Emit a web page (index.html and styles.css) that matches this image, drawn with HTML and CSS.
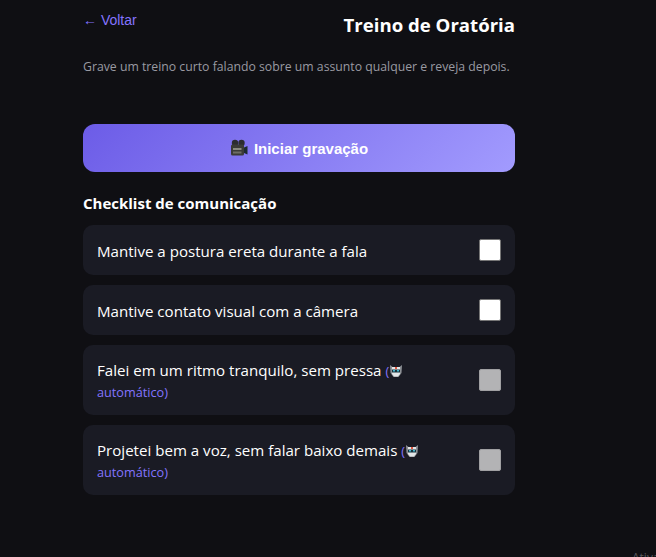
FILE: index.html
```html
<!DOCTYPE html>
<html lang="pt-BR">
<head>
    <meta charset="UTF-8">
    <meta name="viewport" content="width=device-width, initial-scale=1.0">
    <title>Treino de Oratória</title>
    <link rel="stylesheet" href="styles.css">
</head>
<body>
    <div class="container">
        <header class="top">
            <a class="back" href="#">← Voltar</a>
            <h1>Treino de Oratória</h1>
        </header>
        <p class="intro">Grave um treino curto falando sobre um assunto qualquer e reveja depois.</p>

        <button class="record" type="button">
            <svg class="camera" viewBox="0 0 18 18" width="18" height="18" aria-hidden="true">
                <circle cx="5" cy="4" r="3.200" fill="#2c2c30"/>
                <circle cx="11.500" cy="4" r="3.200" fill="#2c2c30"/>
                <rect x="1" y="5.500" width="13" height="11" rx="1.500" fill="#3b3b37"/>
                <rect x="3" y="9" width="8.500" height="2" fill="#8a8a80"/>
                <rect x="3" y="12.500" width="8.500" height="2" fill="#6e6e66"/>
                <path d="M14 8.500l3.500-1.500v8.500l-3.500-1.500z" fill="#1d2a30"/>
            </svg>
            Iniciar gravação
        </button>

        <h2>Checklist de comunicação</h2>
        <ul class="checklist">
            <li class="item">
                <span>Mantive a postura ereta durante a fala</span>
                <input type="checkbox">
            </li>
            <li class="item">
                <span>Mantive contato visual com a câmera</span>
                <input type="checkbox">
            </li>
            <li class="item tall">
                <span>Falei em um ritmo tranquilo, sem pressa <small class="auto">(<svg class="robot" viewBox="0 0 14 14" width="14" height="14" aria-hidden="true"><path d="M1 1l2.500 2h7L13 1l-.5 8L9.500 13h-5L1.500 9z" fill="#8d9196"/><path d="M3 3h8v7l-2 2.500H5L3 10z" fill="#e4e6e8"/><rect x="6" y="3" width="2" height="2" fill="#e0563f"/><rect x="3" y="5.500" width="8" height="3" fill="#17323c"/><rect x="4" y="6" width="2" height="1.500" fill="#48b8d0"/><rect x="8" y="6" width="2" height="1.500" fill="#48b8d0"/></svg> automático)</small></span>
                <input type="checkbox" disabled>
            </li>
            <li class="item tall">
                <span>Projetei bem a voz, sem falar baixo demais <small class="auto">(<svg class="robot" viewBox="0 0 14 14" width="14" height="14" aria-hidden="true"><path d="M1 1l2.500 2h7L13 1l-.5 8L9.500 13h-5L1.500 9z" fill="#8d9196"/><path d="M3 3h8v7l-2 2.500H5L3 10z" fill="#e4e6e8"/><rect x="6" y="3" width="2" height="2" fill="#e0563f"/><rect x="3" y="5.500" width="8" height="3" fill="#17323c"/><rect x="4" y="6" width="2" height="1.500" fill="#48b8d0"/><rect x="8" y="6" width="2" height="1.500" fill="#48b8d0"/></svg> automático)</small></span>
                <input type="checkbox" disabled>
            </li>
        </ul>
    </div>
    <div class="watermark">Ativar o Windows</div>
</body>
</html>
```

FILE: styles.css
```css
html, body {
    height: 100%;
}
body {
    margin: 0;
    background-color: #0f0f13;
    color: #fff;
    font-family: "Open Sans", "Noto Sans", sans-serif;
    overflow: hidden;
    position: relative;
}
.container {
    width: 432px;
    margin-left: 83px;
    padding-top: 12px;
}
.top {
    display: flex;
    justify-content: space-between;
    align-items: flex-start;
}
.back {
    color: #8474ff;
    font-family: "Liberation Sans", Arial, sans-serif;
    font-size: 14px;
    line-height: 17px;
    text-decoration: none;
}
h1 {
    margin: 1px 0 0;
    font-size: 18.600px;
    line-height: 24px;
    font-weight: 700;
}
.intro {
    margin: 21px 0 0;
    color: #9a9aa2;
    font-size: 12.250px;
    line-height: 18px;
}
.record {
    display: flex;
    justify-content: center;
    align-items: center;
    gap: 6px;
    width: 100%;
    height: 48px;
    margin-top: 48px;
    border: none;
    border-radius: 12px;
    background: linear-gradient(135deg, #6c5ce7, #a29bfe);
    color: #fff;
    font-family: "Liberation Sans", Arial, sans-serif;
    font-size: 15px;
    font-weight: 700;
}
h2 {
    margin: 22px 0 12px;
    font-size: 15px;
    line-height: 19px;
    font-weight: 700;
}
.checklist {
    list-style-type: none;
    margin: 0;
    padding: 0;
    display: flex;
    flex-direction: column;
    gap: 10px;
}
.item {
    display: flex;
    justify-content: space-between;
    align-items: center;
    gap: 12px;
    min-height: 50px;
    box-sizing: border-box;
    padding: 0 14px;
    background-color: #1a1b24;
    border-radius: 10px;
    font-size: 15.100px;
    line-height: 21px;
}
.item.tall {
    min-height: 70px;
}
.item span {
    flex: 1;
    padding-top: 2px;
}
.auto {
    color: #8474ff;
    font-size: 12.700px;
    line-height: 1;
}
.robot {
    height: 14px;
    vertical-align: -2px;
}
.item input {
    appearance: none;
    flex: none;
    width: 22px;
    height: 22px;
    margin: 0;
    background-color: #fff;
    border: 1px solid #767676;
    border-radius: 2px;
}
.item input:disabled {
    background-color: #b3b3b5;
    border-color: #a0a0a2;
}
.camera {
    flex: none;
}
.watermark {
    position: absolute;
    left: 632px;
    top: 550px;
    color: #55555a;
    font-size: 12px;
    line-height: 16px;
    white-space: nowrap;
}
```
